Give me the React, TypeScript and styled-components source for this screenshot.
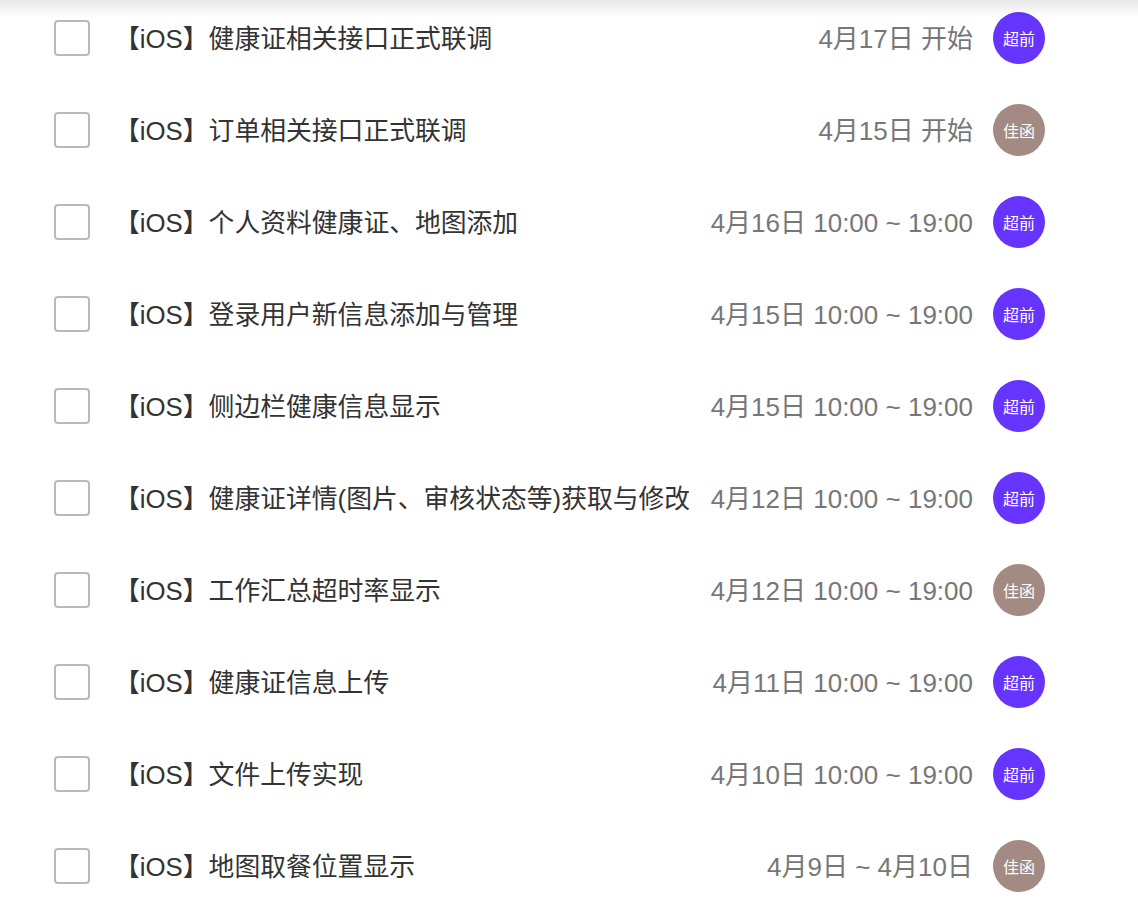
import React from "react";
import styled, { createGlobalStyle } from "styled-components";

const GlobalStyle = createGlobalStyle`
  html, body {
    margin: 0;
    padding: 0;
    background: #fff;
  }
  body {
    font-family: "Liberation Sans", "Noto Sans CJK SC", sans-serif;
  }
`;

type Task = {
  title: string;
  time: string;
  owner: "chao" | "jia";
};

const TASKS: Task[] = [
  { title: "【iOS】健康证相关接口正式联调", time: "4月17日 开始", owner: "chao" },
  { title: "【iOS】订单相关接口正式联调", time: "4月15日 开始", owner: "jia" },
  { title: "【iOS】个人资料健康证、地图添加", time: "4月16日 10:00 ~ 19:00", owner: "chao" },
  { title: "【iOS】登录用户新信息添加与管理", time: "4月15日 10:00 ~ 19:00", owner: "chao" },
  { title: "【iOS】侧边栏健康信息显示", time: "4月15日 10:00 ~ 19:00", owner: "chao" },
  { title: "【iOS】健康证详情(图片、审核状态等)获取与修改", time: "4月12日 10:00 ~ 19:00", owner: "chao" },
  { title: "【iOS】工作汇总超时率显示", time: "4月12日 10:00 ~ 19:00", owner: "jia" },
  { title: "【iOS】健康证信息上传", time: "4月11日 10:00 ~ 19:00", owner: "chao" },
  { title: "【iOS】文件上传实现", time: "4月10日 10:00 ~ 19:00", owner: "chao" },
  { title: "【iOS】地图取餐位置显示", time: "4月9日 ~ 4月10日", owner: "jia" },
];

const OWNERS = {
  chao: { name: "超前", color: "#6633ff" },
  jia: { name: "佳函", color: "#a38a82" },
};

const Page = styled.div`
  position: relative;
  width: 1138px;
  height: 912px;
  overflow: hidden;
  background: #fff;
`;

const TopShade = styled.div`
  position: absolute;
  top: 0;
  left: 0;
  right: 0;
  height: 18px;
  background: linear-gradient(to bottom, rgba(0, 0, 0, 0.09), rgba(0, 0, 0, 0));
  pointer-events: none;
`;

const List = styled.div`
  margin-top: -8px;
  display: flex;
  flex-direction: column;
`;

const Row = styled.div`
  height: 92px;
  display: flex;
  align-items: center;
`;

const Check = styled.div`
  margin-left: 54px;
  width: 36px;
  height: 36px;
  box-sizing: border-box;
  border: 2px solid #b9b9b9;
  border-radius: 4px;
  flex-shrink: 0;
`;

const Title = styled.div`
  flex: 1;
  margin-left: 24px;
  padding-bottom: 4px;
  font-size: 25.8px;
  color: #333;
  white-space: nowrap;
`;

const Time = styled.div`
  padding-bottom: 4px;
  font-size: 26px;
  color: #777;
  white-space: nowrap;
`;

const Avatar = styled.div<{ $bg: string }>`
  width: 52px;
  height: 52px;
  margin-left: 20px;
  margin-right: 93px;
  border-radius: 50%;
  background: ${(p) => p.$bg};
  color: #fff;
  font-size: 16px;
  display: flex;
  align-items: center;
  justify-content: center;
  flex-shrink: 0;
`;

export default function App() {
  return (
    <Page>
      <GlobalStyle />
      <List>
        {TASKS.map((task, i) => {
          const owner = OWNERS[task.owner];
          return (
            <Row key={i}>
              <Check />
              <Title>{task.title}</Title>
              <Time>{task.time}</Time>
              <Avatar $bg={owner.color}>{owner.name}</Avatar>
            </Row>
          );
        })}
      </List>
      <TopShade />
    </Page>
  );
}
